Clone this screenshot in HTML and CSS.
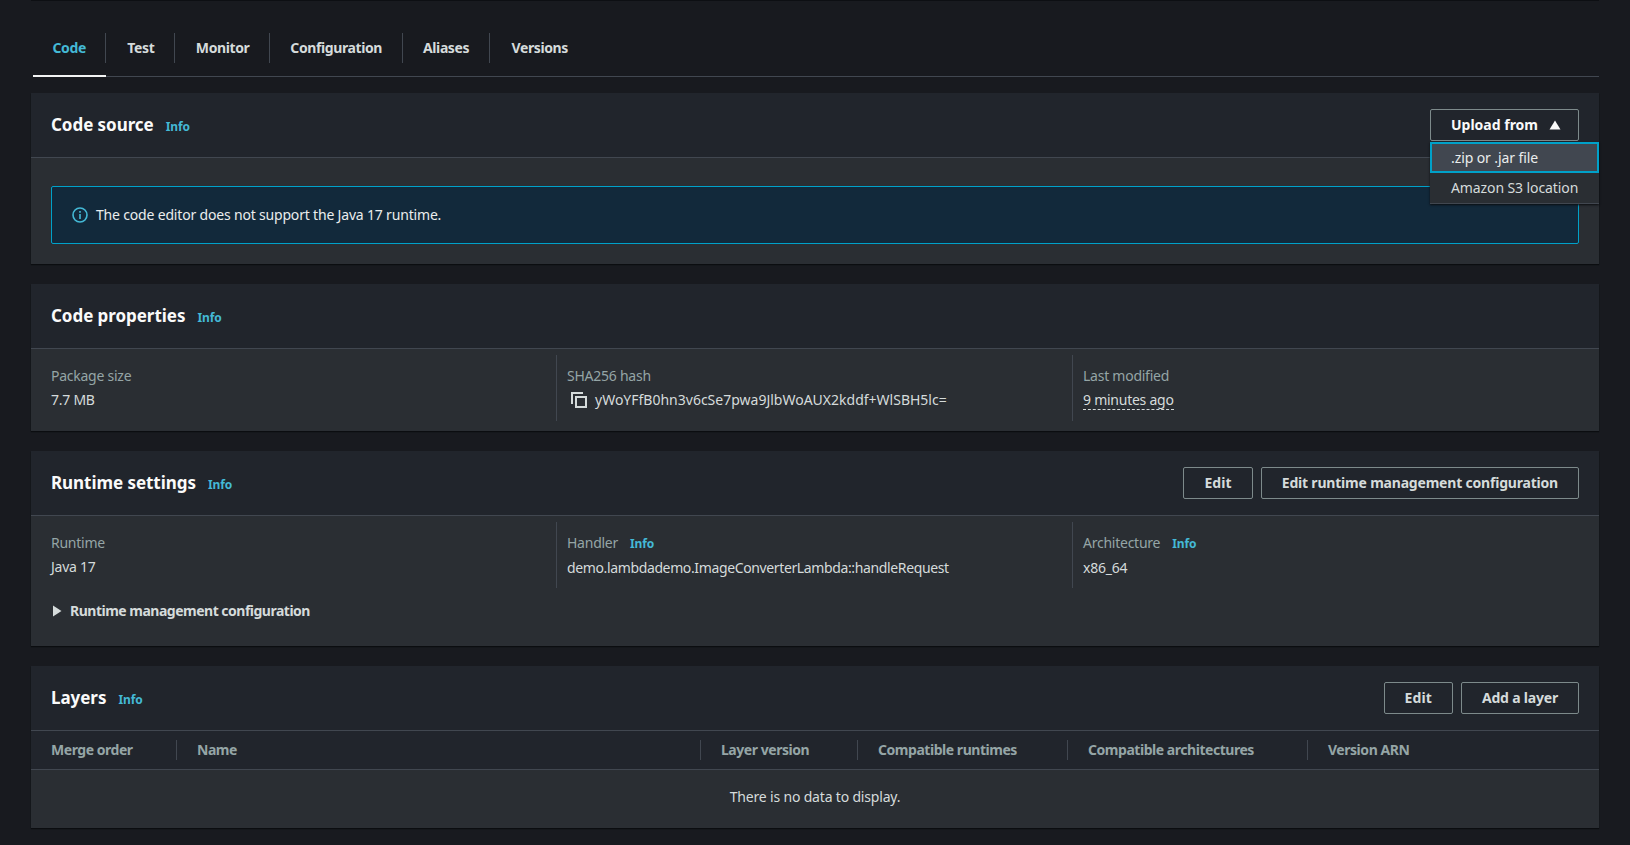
FILE: index.html
```html
<!DOCTYPE html>
<html lang="en">
<head>
<meta charset="utf-8">
<title>Lambda function code</title>
<link rel="stylesheet" href="styles.css">
</head>
<body>
<main class="page">
  <div class="prev-edge"></div>
  <nav class="tabs">
    <a class="tab active">Code</a>
    <a class="tab test">Test</a>
    <a class="tab">Monitor</a>
    <a class="tab">Configuration</a>
    <a class="tab">Aliases</a>
    <a class="tab last">Versions</a>
  </nav>

  <section class="card source">
    <header class="card-head">
      <h2>Code source</h2><a class="info title-info">Info</a>
      <div class="actions">
        <div class="dropdown">
          <button class="btn upload"><span>Upload from</span>
            <svg class="caret" width="12" height="10" viewBox="0 0 12 10"><path d="M6 .5 11.5 9.5H.5Z" fill="currentColor"/></svg>
          </button>
          <ul class="menu">
            <li class="menu-item selected">.zip or .jar file</li>
            <li class="menu-item">Amazon S3 location</li>
          </ul>
        </div>
      </div>
    </header>
    <div class="source-body">
      <div class="alert">
        <svg class="alert-icon" width="16" height="16" viewBox="0 0 16 16" fill="none" stroke="currentColor" stroke-width="1.6"><circle cx="8" cy="8" r="7"/><path d="M8 7v5M8 4v1.8"/></svg>
        <span>The code editor does not support the Java 17 runtime.</span>
      </div>
    </div>
  </section>

  <section class="card">
    <header class="card-head">
      <h2>Code properties</h2><a class="info title-info">Info</a>
    </header>
    <div class="cols">
      <div class="col"><div class="label">Package size</div><div class="value">7.7 MB</div></div>
      <div class="col"><div class="label">SHA256 hash</div>
        <div class="value hash">
          <svg class="copy" width="16" height="16" viewBox="0 0 16 16" fill="none" stroke="currentColor" stroke-width="2"><path d="M1 12V1h11"/><rect x="5" y="5" width="10" height="10"/></svg>
          <span>yWoYFfB0hn3v6cSe7pwa9JlbWoAUX2kddf+WlSBH5lc=</span>
        </div>
      </div>
      <div class="col"><div class="label">Last modified</div><div class="value"><span class="dashed">9 minutes ago</span></div></div>
    </div>
  </section>

  <section class="card">
    <header class="card-head">
      <h2>Runtime settings</h2><a class="info title-info">Info</a>
      <div class="actions">
        <button class="btn edit">Edit</button>
        <button class="btn">Edit runtime management configuration</button>
      </div>
    </header>
    <div class="cols runtime">
      <div class="col"><div class="label">Runtime</div><div class="value">Java 17</div></div>
      <div class="col"><div class="label">Handler<a class="info">Info</a></div><div class="value">demo.lambdademo.ImageConverterLambda::handleRequest</div></div>
      <div class="col"><div class="label">Architecture<a class="info">Info</a></div><div class="value">x86_64</div></div>
    </div>
    <div class="expander">
      <svg width="10" height="12" viewBox="0 0 10 12"><path d="M1 .5 9.5 6 1 11.5Z" fill="currentColor"/></svg>
      <span>Runtime management configuration</span>
    </div>
  </section>

  <section class="card">
    <header class="card-head">
      <h2>Layers</h2><a class="info title-info">Info</a>
      <div class="actions">
        <button class="btn edit">Edit</button>
        <button class="btn">Add a layer</button>
      </div>
    </header>
    <div class="thead">
      <div class="th c1">Merge order</div>
      <div class="th c2">Name</div>
      <div class="th c3">Layer version</div>
      <div class="th c4">Compatible runtimes</div>
      <div class="th c5">Compatible architectures</div>
      <div class="th c6">Version ARN</div>
    </div>
    <div class="empty">There is no data to display.</div>
  </section>
</main>
</body>
</html>
```
FILE: styles.css
```css
* { box-sizing: border-box; }
html, body { margin: 0; height: 100%; }
body {
  background: #181a1f;
  color: #d5dbdb;
  font-family: "Noto Sans", "Open Sans", Arial, sans-serif;
  font-size: 14px;
  line-height: 20px;
  overflow: hidden;
}
.page { width: 1568px; margin-left: 31px; }
.prev-edge { height: 1px; background: #0d0f13; }

.tabs {
  display: flex;
  height: 76px;
  margin: 0 0 16px 2px;
  padding-top: 32px;
  border-bottom: 1px solid #414750;
}
.tab {
  position: relative;
  height: 44px;
  padding: 5px 20.5px 0;
  font-weight: 700;
  letter-spacing: -0.4px;
  color: #d5dbdb;
}
.tab::after {
  content: "";
  position: absolute;
  right: 0;
  top: 0;
  height: 30px;
  width: 1px;
  background: #414750;
}
.tab.test { padding-left: 21px; padding-right: 21px; }
.tab.last { padding-left: 22px; }
.tab.last::after { display: none; }
.tab.active { color: #44b9d6; padding-left: 19.5px; border-bottom: 2px solid #f2f3f3; }

.card {
  background: #2a2e33;
  margin-bottom: 20px;
  box-shadow: 0 1px 1px #0b0d10;
}
.card-head {
  display: flex;
  align-items: center;
  height: 65px;
  padding: 0 20px;
  background: #21252c;
  border-bottom: 1px solid #414750;
}
h2 {
  margin: 0;
  font-size: 17px;
  line-height: 24px;
  font-weight: 700;
  letter-spacing: -0.05px;
  color: #fafafa;
}
.info {
  color: #44b9d6;
  font-size: 12px;
  font-weight: 700;
  letter-spacing: -0.1px;
  margin-left: 12px;
}
.title-info { margin-top: 4px; margin-left: 12px; }
.actions { margin-left: auto; display: flex; gap: 8px; }
.btn {
  height: 32px;
  padding: 0 20px;
  background: transparent;
  border: 1px solid #7d8a8b;
  border-radius: 2px;
  color: #d5dbdb;
  font: 700 14px/20px "Noto Sans", "Open Sans", Arial, sans-serif;
  letter-spacing: -0.2px;
  white-space: nowrap;
}
.btn.edit { letter-spacing: 0.1px; }
.dropdown { position: relative; }
.upload { width: 149px; display: flex; align-items: center; gap: 11px; background: #21252c; color: #fafafa; letter-spacing: 0; }
.caret { flex: none; }
.menu {
  position: absolute;
  left: 0;
  top: 33px;
  width: 169px;
  margin: 0;
  padding: 0;
  list-style: none;
  background: #2a2e33;
  box-shadow: 0 1px 2px #0b0d10;
  letter-spacing: -0.1px;
  z-index: 2;
}
.menu-item { height: 31px; padding: 5px 21px; white-space: nowrap; border-bottom: 1px solid #414750; }
.menu-item.selected { background: #414750; border: 2px solid #00a1c9; padding: 4px 19px; color: #eaeded; }

.source-body { padding: 28px 20px 20px; }
.alert {
  display: flex;
  align-items: center;
  gap: 8px;
  height: 58px;
  padding: 0 20px;
  background: #12293b;
  border: 1px solid #00a1c9;
  border-radius: 2px;
  letter-spacing: -0.18px;
  color: #eaeded;
}
.alert-icon { color: #44b9d6; flex: none; }

.cols {
  display: grid;
  grid-template-columns: 525px 516px 516px;
  padding-top: 6px;
  padding-bottom: 10px;
}
.col { padding: 11px 0 0 10px; border-left: 1px solid #414750; height: 66px; }
.col:first-child { padding-left: 20px; border-left: 0; }
.label { color: #95a5a6; line-height: 20px; letter-spacing: -0.25px; }
.value { margin-top: 4px; color: #d5dbdb; letter-spacing: -0.25px; }
.col:nth-child(2) .value { letter-spacing: -0.37px; }
.col:nth-child(2) .hash { letter-spacing: 0; display: flex; align-items: center; gap: 8px; padding-left: 4px; }
.copy { color: #d5dbdb; flex: none; }
.dashed { border-bottom: 1px dashed #d5dbdb; }
.runtime { padding-bottom: 0; }
.expander {
  display: flex;
  align-items: center;
  gap: 8px;
  height: 58px;
  padding: 5px 0 17px 21px;
  font-weight: 700;
  letter-spacing: -0.5px;
  color: #d5dbdb;
}

.thead {
  display: flex;
  align-items: center;
  height: 39px;
  background: #21252c;
  border-bottom: 1px solid #414750;
  font-weight: 700;
  letter-spacing: -0.46px;
  color: #95a5a6;
}
.th { height: 20px; padding-left: 20px; border-left: 1px solid #414750; flex: none; }
.th.c1 { width: 145px; border-left: 0; }
.th.c2 { width: 524px; }
.th.c3 { width: 157px; }
.th.c4 { width: 210px; }
.th.c5 { width: 240px; }
.th.c6 { width: 260px; }
.empty { height: 58px; padding-top: 17px; text-align: center; letter-spacing: -0.18px; color: #d5dbdb; }
```
